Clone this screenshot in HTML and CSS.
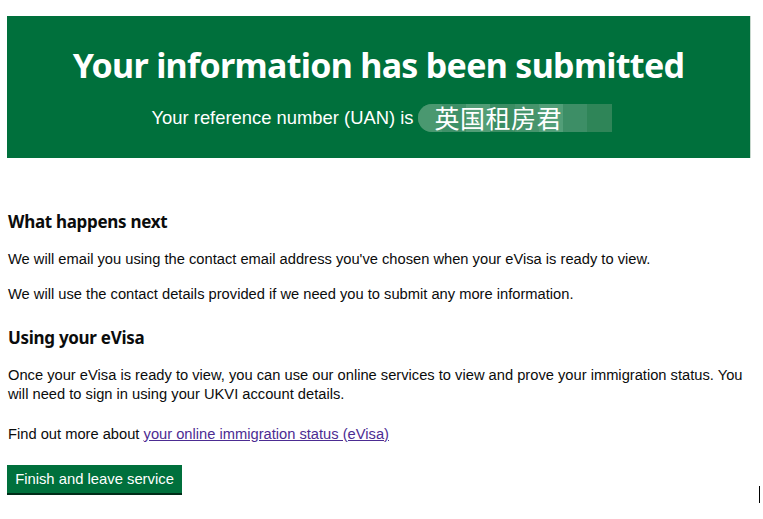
FILE: index.html
```html
<!DOCTYPE html>
<html lang="en">
<head>
<meta charset="utf-8">
<title>Application complete</title>
<link rel="stylesheet" href="styles.css">
</head>
<body>
<main class="page">
  <div class="panel">
    <h1 class="panel-title">Your information has been submitted</h1>
    <div class="panel-body">
      <span>Your reference number (UAN) is</span>
      <span class="ref">
        <span class="mosaic">
          <i class="m m1"></i><i class="m m2"></i><i class="m m3"></i><i class="m m4"></i><i class="m m5"></i><i class="m m6"></i><i class="m m7"></i><i class="m m8"></i>
        </span>
        <span class="ref-text">英国租房君</span>
      </span>
    </div>
  </div>

  <h2 class="heading">What happens next</h2>
  <p class="body">We will email you using the contact email address you've chosen when your eVisa is ready to view.</p>
  <p class="body">We will use the contact details provided if we need you to submit any more information.</p>

  <h2 class="heading heading-2">Using your eVisa</h2>
  <p class="body body-tight">Once your eVisa is ready to view, you can use our online services to view and prove your immigration status. You will need to sign in using your UKVI account details.</p>
  <p class="body">Find out more about <a class="link" href="#">your online immigration status (eVisa)</a></p>

  <button class="button" type="button">Finish and leave service</button>
</main>
<span class="caret"></span>
</body>
</html>
```
FILE: styles.css
```css
html, body {
  margin: 0;
  padding: 0;
  background: #ffffff;
}
body {
  font-family: "Liberation Sans", Arial, sans-serif;
  color: #0b0c0c;
  width: 763px;
  height: 519px;
  overflow: hidden;
  position: relative;
}
.page {
  padding: 16px 12px 0 7px;
}
.panel {
  background: #00703c;
  color: #ffffff;
  height: 142px;
  box-sizing: border-box;
  padding-top: 27px;
  text-align: center;
  border-right: 1px solid #c8d8ce;
}
.panel-title {
  margin: 0;
  font-family: "Noto Sans", sans-serif;
  font-weight: 700;
  font-size: 34px;
  line-height: 44px;
  letter-spacing: -0.7px;
}
.panel-body {
  margin-top: 17px;
  font-size: 18.4px;
  line-height: 28px;
  display: flex;
  justify-content: center;
  align-items: center;
  gap: 4px;
  padding-left: 6px;
}
.ref {
  position: relative;
  display: inline-block;
  width: 194px;
  height: 28px;
}
.mosaic {
  position: absolute;
  inset: 0;
  display: grid;
  grid-template-columns: repeat(8, 1fr);
  border-radius: 14px 0 0 14px;
  overflow: hidden;
  background: #2d8a5c;
  filter: blur(0.6px);
}
.m { display: block; }
.m1 { background: #4a9870; }
.m2 { background: #3f9068; }
.m3 { background: #519d76; }
.m4 { background: #3b8d63; }
.m5 { background: #46946c; }
.m6 { background: #529e78; }
.m7 { background: #3d8e66; }
.m8 { background: #2f8558; }
.ref-text {
  position: relative;
  display: block;
  font-family: "Noto Sans CJK SC", sans-serif;
  font-size: 25px;
  line-height: 26px;
  padding-left: 17px;
  text-align: left;
  letter-spacing: 0.5px;
}
.heading {
  margin: 52px 0 0 1px;
  font-family: "Noto Sans", sans-serif;
  font-weight: 700;
  font-size: 17px;
  line-height: 24px;
  letter-spacing: -0.3px;
}
.heading-2 {
  margin-top: 22px;
}
.body {
  margin: 16px 0 0 1px;
  font-size: 14.7px;
  line-height: 19px;
}
.body + .body {
  margin-top: 16px;
}
.body-tight + .body {
  margin-top: 21px;
}
.link {
  color: #4c2c92;
  text-decoration: underline;
}
.button {
  margin-top: 21px;
  display: block;
  background: #00703c;
  color: #ffffff;
  border: 0;
  box-shadow: 0 2px 0 #002d18;
  font-family: "Liberation Sans", Arial, sans-serif;
  font-size: 14.8px;
  line-height: 19px;
  padding: 5px 0 4px;
  width: 175px;
  white-space: nowrap;
  text-align: center;
}
.caret {
  position: absolute;
  left: 759px;
  top: 486px;
  width: 1px;
  height: 17px;
  background: #000000;
}
```
